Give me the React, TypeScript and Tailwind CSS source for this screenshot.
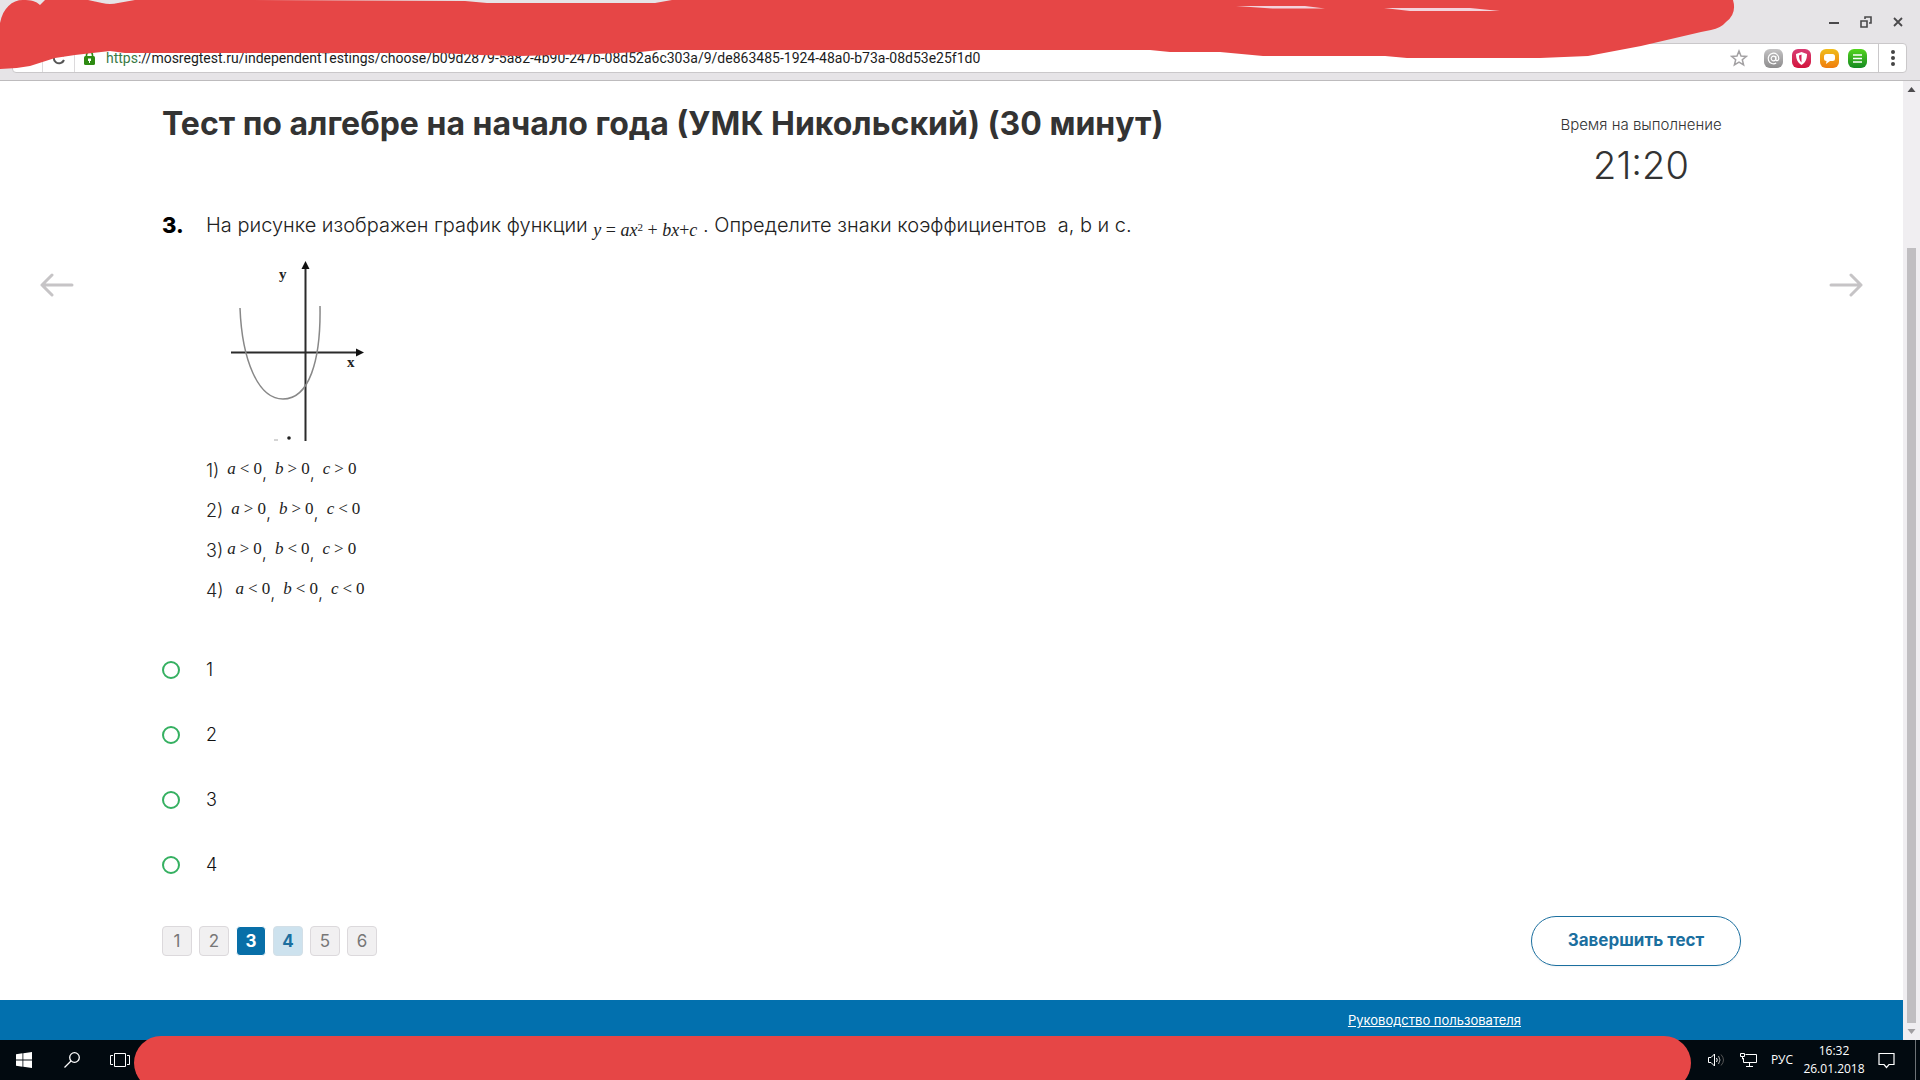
import React from 'react';

const answers = ['1', '2', '3', '4'];

const variants = [
  { n: '1)', gap: 'gap-2', parts: [['a', '<'], ['b', '>'], ['c', '>']] },
  { n: '2)', gap: 'gap-2', parts: [['a', '>'], ['b', '>'], ['c', '<']] },
  { n: '3)', gap: 'gap-1', parts: [['a', '>'], ['b', '<'], ['c', '>']] },
  { n: '4)', gap: 'gap-3', parts: [['a', '<'], ['b', '<'], ['c', '<']] },
];

const pages = [
  { n: 1, style: 'bg-[#f1f0f1] border-[#dcd9dc] text-[#777]' },
  { n: 2, style: 'bg-[#f1f0f1] border-[#dcd9dc] text-[#777]' },
  { n: 3, style: 'bg-[#086fa8] border-white text-white font-bold' },
  { n: 4, style: 'bg-[#cde2ee] border-[#d3dfe7] text-[#1b6f9f] font-bold' },
  { n: 5, style: 'bg-[#f1f0f1] border-[#dcd9dc] text-[#777]' },
  { n: 6, style: 'bg-[#f1f0f1] border-[#dcd9dc] text-[#777]' },
];

const ExtensionIcons = () => (
  <div className="flex gap-[9px]">
    <button aria-label="Почта" className="w-[19px] h-[19px] rounded-md bg-linear-to-b from-[#c4c3c4] to-[#8d8c8d] flex items-center justify-center">
      <svg width="15" height="15" viewBox="0 0 15 15" fill="none" stroke="#fff" strokeWidth="1.2">
        <circle cx="7.5" cy="7.5" r="2.3" />
        <path d="M9.8 5v3.6c0 1.6 3 1.4 3-1.2a5.3 5.3 0 1 0-2.6 4.7" />
      </svg>
    </button>
    <button aria-label="Защита" className="w-[19px] h-[19px] rounded-md bg-linear-to-b from-[#d83a73] to-[#d3103c] flex items-center justify-center">
      <svg width="13" height="15" viewBox="0 0 13 15">
        <path d="M6.5 1 12 3c0 5-1.5 8.5-5.5 11C2.5 11.5 1 8 1 3z" fill="#fff" />
        <path d="M6.5 3.5v8C4.5 9.5 4 7 4 4.5z" fill="#d8235a" />
      </svg>
    </button>
    <button aria-label="Сообщения" className="w-[19px] h-[19px] rounded-md bg-linear-to-b from-[#efbd1c] to-[#ef7c0c] flex items-center justify-center">
      <svg width="13" height="13" viewBox="0 0 13 13">
        <path d="M3.5 2h6A2.5 2.5 0 0 1 12 4.5v2A2.5 2.5 0 0 1 9.5 9H7l-4 3 .5-3A2.5 2.5 0 0 1 1 6.5v-2A2.5 2.5 0 0 1 3.5 2z" fill="#fff" />
      </svg>
    </button>
    <button aria-label="Список" className="w-[19px] h-[19px] rounded-md bg-linear-to-b from-[#52d51c] to-[#128a20] flex items-center justify-center">
      <svg width="11" height="11" viewBox="0 0 11 11" stroke="#fff" strokeWidth="1.5">
        <path d="M1 2h9M1 5.5h9M1 9h9" />
      </svg>
    </button>
  </div>
);

const BrowserBar = () => (
  <header className="relative h-[81px] shrink-0 bg-[#e6e4e7] border-b border-[#bdbbbd] pl-3 pr-[13px] flex flex-col">
    <div className="h-[43px] flex items-center justify-end gap-5 pr-[3px] text-[#4a494b]">
      <button aria-label="Свернуть">
        <svg width="12" height="12" viewBox="0 0 12 12"><path d="M1 7h10" stroke="currentColor" strokeWidth="2" /></svg>
      </button>
      <button aria-label="Восстановить">
        <svg width="12" height="12" viewBox="0 0 12 12" fill="none" stroke="currentColor" strokeWidth="1.6">
          <path d="M1 5h6v6H1z" /><path d="M5 3V1h6v6H9" />
        </svg>
      </button>
      <button aria-label="Закрыть">
        <svg width="12" height="12" viewBox="0 0 12 12"><path d="m2 2 8 8M10 2l-8 8" stroke="currentColor" strokeWidth="1.8" /></svg>
      </button>
    </div>
    <div className="h-[30px] bg-white border border-[#cac8ca] rounded-sm flex items-center">
      <div className="w-[30px] h-full border-r border-[#dcdadc]" />
      <button aria-label="Обновить" className="w-8 h-full border-r border-[#dcdadc] flex items-center justify-center">
        <svg width="14" height="14" viewBox="0 0 14 14" fill="none" stroke="#555" strokeWidth="2">
          <path d="M12 9a5.3 5.3 0 1 1 0-4" />
        </svg>
      </button>
      <svg className="ml-[9px] mr-[11px]" width="11" height="15" viewBox="0 0 11 15">
        <path d="M2.5 6V4a3 3 0 0 1 6 0v2" fill="none" stroke="#2e8b12" strokeWidth="1.6" />
        <rect y="5" width="11" height="9" rx="1.5" fill="#2e8b12" />
        <path d="M4 7.5h3V10H6v2H5v-2H4z" fill="#fff" />
      </svg>
      <p className="flex-1 text-[14px] leading-5 text-[#1c1c1c] whitespace-nowrap font-['Roboto',sans-serif]">
        <span className="text-[#3a7a45]">https</span>://mosregtest.ru/independentTestings/choose/b09d2879-5a82-4b90-247b-08d52a6c303a/9/de863485-1924-48a0-b73a-08d53e25f1d0
      </p>
      <button aria-label="В закладки" className="mr-4">
        <svg width="18" height="18" viewBox="0 0 18 18" fill="none" stroke="#a3a1a3" strokeWidth="1.5">
          <path d="m9 2 2 5 5.3.4-4 3.4 1.3 5.2L9 13.200 4.400 16l1.300-5.200-4-3.400L7 7z" />
        </svg>
      </button>
      <ExtensionIcons />
      <button aria-label="Меню" className="ml-[11px] w-7 h-full border-l border-[#cac8ca] flex items-center justify-center">
        <svg width="4" height="16" viewBox="0 0 4 16" fill="#444"><circle cx="2" cy="2" r="2" /><circle cx="2" cy="8" r="2" /><circle cx="2" cy="14" r="2" /></svg>
      </button>
    </div>
    <svg className="absolute top-0 left-0 w-full h-20 pointer-events-none" viewBox="0 0 1920 80" preserveAspectRatio="none">
      <path
        d="M0 23C3 8 12 0 23 0c8 0 13 1 17 5l5-5h43l14 3q8 2 16 0l17-3h93l237 1 22 2h168l17-3h1061q4 14-7 22-5 6-15 8l-10 2-60 14-53 10-48 2h-133l-22-2h-122l-43-4h-50l-20-2H660l-20 2-45 2-75 2-40-1-40-2H125l-15-2-35 4-20 3-25 8Q15 69 0 69z"
        fill="#e64646"
      />
      <path d="m1236 6 36 2.500h53L1305 6zM1384 8l26 3h90l-30-3z" fill="#f3d3dc" />
    </svg>
  </header>
);

const ScrollBar = () => (
  <div className="w-[17px] shrink-0 bg-[#f0eef1] flex flex-col items-center">
    <svg width="17" height="17" viewBox="0 0 17 17"><path d="M4.5 11h8l-4-5z" fill="#4d4b4e" /></svg>
    <div className="flex-1 w-[9px] pt-[150px]">
      <div className="h-full bg-[#c0bec1]" />
    </div>
    <svg width="17" height="17" viewBox="0 0 17 17"><path d="M4.5 6h8l-4 5z" fill="#a09ea1" /></svg>
  </div>
);

const Graph = () => (
  <svg width="200" height="200" viewBox="0 0 200 200" className="-ml-1.5">
    <path d="M31 102.5h128M105.5 16v175" stroke="#2b2b2b" strokeWidth="2" />
    <path d="M105.5 11l4 8h-8zM164 102.5l-8-4v8z" fill="#111" />
    <path d="M40 58C42 110 58 149 83 149c26 0 38-38 37-93" fill="none" stroke="#888" strokeWidth="1.5" />
    <circle cx="89" cy="188" r="1.8" fill="#222" />
    <path d="M74 190h4" stroke="#aaa" />
    <text x="79" y="29" fontSize="15" fontWeight="700" fill="#222" className="font-['Liberation_Serif',serif]">y</text>
    <text x="147" y="117" fontSize="15" fontWeight="700" fill="#222" className="font-['Liberation_Serif',serif]">x</text>
  </svg>
);

const Inequality = ({ name, sign }: { name: string; sign: string }) => (
  <span className="flex gap-1 pb-1 text-[17px] font-normal font-['Liberation_Serif',serif]">
    <i>{name}</i>
    <span>{sign}</span>
    <span>0</span>
  </span>
);

const Question = () => (
  <section className="flex">
    <h2 className="w-11 shrink-0 text-[22px] leading-8 font-extrabold text-black">3.</h2>
    <div className="flex-1 text-[18px] text-[#222]">
      <p className="text-[20px] leading-8 font-light whitespace-pre-wrap">
        На рисунке изображен график функции <span className="relative top-1 text-[18px] font-normal font-['Liberation_Serif',serif]"><i>y</i> = <i>ax</i><sup className="text-[11px]">2</sup> + <i>bx</i>+<i>c</i></span> . Определите знаки коэффициентов  a, b и c.
      </p>
      <div className="mt-2"><Graph /></div>
      <ol className="mt-px">
        {variants.map((v) => (
          <li key={v.n} className={`h-10 flex items-center leading-6 font-light ${v.gap}`}>
            <span>{v.n}</span>
            <span className="flex">
              {v.parts.map(([name, sign], i) => (
                <span key={name} className="flex items-end">
                  <Inequality name={name} sign={sign} />
                  {i < 2 && <span className="mr-2">,</span>}
                </span>
              ))}
            </span>
          </li>
        ))}
      </ol>
    </div>
  </section>
);

const Taskbar = () => (
  <footer className="relative h-10 shrink-0 bg-[#020a10] text-white flex items-center justify-between font-['Open_Sans',sans-serif]">
    <div className="flex items-center pl-4 gap-8">
      <button aria-label="Пуск">
        <svg width="16" height="16" viewBox="0 0 16 16" fill="#fff"><path d="M0 2.2 6.5 1.3v6.2H0zM7.3 1.2 16 0v7.5H7.3zM0 8.4h6.5v6.3L0 13.8zM7.3 8.4H16V16l-8.7-1.2z" /></svg>
      </button>
      <button aria-label="Поиск">
        <svg width="16" height="16" viewBox="0 0 16 16" fill="none" stroke="#fff" strokeWidth="1.3"><circle cx="10.5" cy="5.5" r="4.8" /><path d="M7 9 .5 15.5" /></svg>
      </button>
      <button aria-label="Представление задач" className="-ml-0.5">
        <svg width="20" height="16" viewBox="0 0 20 16" fill="none" stroke="#fff"><path d="M4.5 1.5h11v13h-11zM3 3.5H.5v9H3M17 3.5h2.5v9H17" /></svg>
      </button>
    </div>
    <div className="flex items-center">
      <button aria-label="Громкость" className="mr-[15px]">
        <svg width="17" height="16" viewBox="0 0 17 16" fill="none" stroke="#fff"><path d="M.5 5.5H3L6.5 2v12L3 10.5H.5zM8.5 6q1.5 2 0 4" /><path d="M10.5 4q3 4 0 8" stroke="#aaa" /><path d="M13 2.5q5 5.5 0 11" stroke="#555" /></svg>
      </button>
      <button aria-label="Сеть" className="mr-[13px]">
        <svg width="17" height="16" viewBox="0 0 17 16" fill="none" stroke="#fff"><path d="M5.5 2.5h11v8h-13V6M9.5 11v3M6 14.5h7M.5 1.5h4v3h-4zM2.5 5v2h1" /></svg>
      </button>
      <button className="w-6 text-xs">РУС</button>
      <div className="w-20 text-center text-xs leading-[18px]">
        <p>16:32</p>
        <p>26.01.2018</p>
      </div>
      <button aria-label="Уведомления" className="ml-1 mr-5">
        <svg width="17" height="17" viewBox="0 0 17 17" fill="none" stroke="#fff" strokeWidth="1.2"><path d="M1 1.5h15v11h-5l-2.5 3-2.5-3H1z" /></svg>
      </button>
      <div className="w-[5px] h-10 border-l border-[#6d7276]" />
    </div>
    <div className="absolute left-[134px] right-[229px] -top-1 bottom-0 overflow-hidden">
      <div className="h-[54px] rounded-full bg-[#e64646]" />
    </div>
  </footer>
);

export default function App() {
  return (
    <div className="min-h-screen flex flex-col bg-white font-['Inter',sans-serif]">
      <BrowserBar />
      <div className="flex-1 flex">
        <div className="flex-1 flex flex-col">
          <main className="flex-1 flex items-start justify-between px-10">
            <button aria-label="Предыдущий вопрос" className="mt-48">
              <svg width="34" height="24" viewBox="0 0 34 24" fill="none" stroke="#c6c4c6" strokeWidth="3" strokeLinecap="round" strokeLinejoin="round"><path d="M32 12H2M12 2 2 12l10 10" /></svg>
            </button>
            <div className="flex-1 mx-[88px]">
              <div className="flex justify-between h-32">
                <h1 className="pt-[23px] text-[32px] leading-10 font-bold text-[#333]">Тест по алгебре на начало года (УМК Никольский) (30 минут)</h1>
                <div className="w-[200px] pt-8 text-center text-[#333]">
                  <p className="text-[15px] leading-6 font-light">Время на выполнение</p>
                  <p className="text-[38px] leading-[56px] font-light">21:20</p>
                </div>
              </div>
              <Question />
              <form className="mt-[26px]">
                {answers.map((a) => (
                  <label key={a} className="h-[65px] flex items-center text-[18px] font-light text-[#111]">
                    <input type="radio" name="answer" value={a} className="appearance-none w-[18px] h-[18px] mr-[26px] rounded-full border-2 border-[#35b061]" />
                    {a}
                  </label>
                ))}
              </form>
              <div className="mt-[19px] flex items-center justify-between">
                <nav className="flex gap-[7px]">
                  {pages.map((p) => (
                    <button key={p.n} className={`w-[30px] h-[30px] rounded-sm border text-[17px] leading-6 ${p.style}`}>{p.n}</button>
                  ))}
                </nav>
                <button className="w-[210px] h-[50px] rounded-full border border-[#1b6f9f] shadow-xs text-[17px] font-bold text-[#1b6f9f]">Завершить тест</button>
              </div>
            </div>
            <button aria-label="Следующий вопрос" className="mt-48">
              <svg width="34" height="24" viewBox="0 0 34 24" fill="none" stroke="#c6c4c6" strokeWidth="3" strokeLinecap="round" strokeLinejoin="round"><path d="M2 12h30M22 2l10 10-10 10" /></svg>
            </button>
          </main>
          <div className="h-10 bg-[#0270ae] flex items-center justify-end pr-[382px]">
            <a href="#guide" className="text-[13px] leading-5 text-white underline">Руководство пользователя</a>
          </div>
        </div>
        <ScrollBar />
      </div>
      <Taskbar />
    </div>
  );
}
